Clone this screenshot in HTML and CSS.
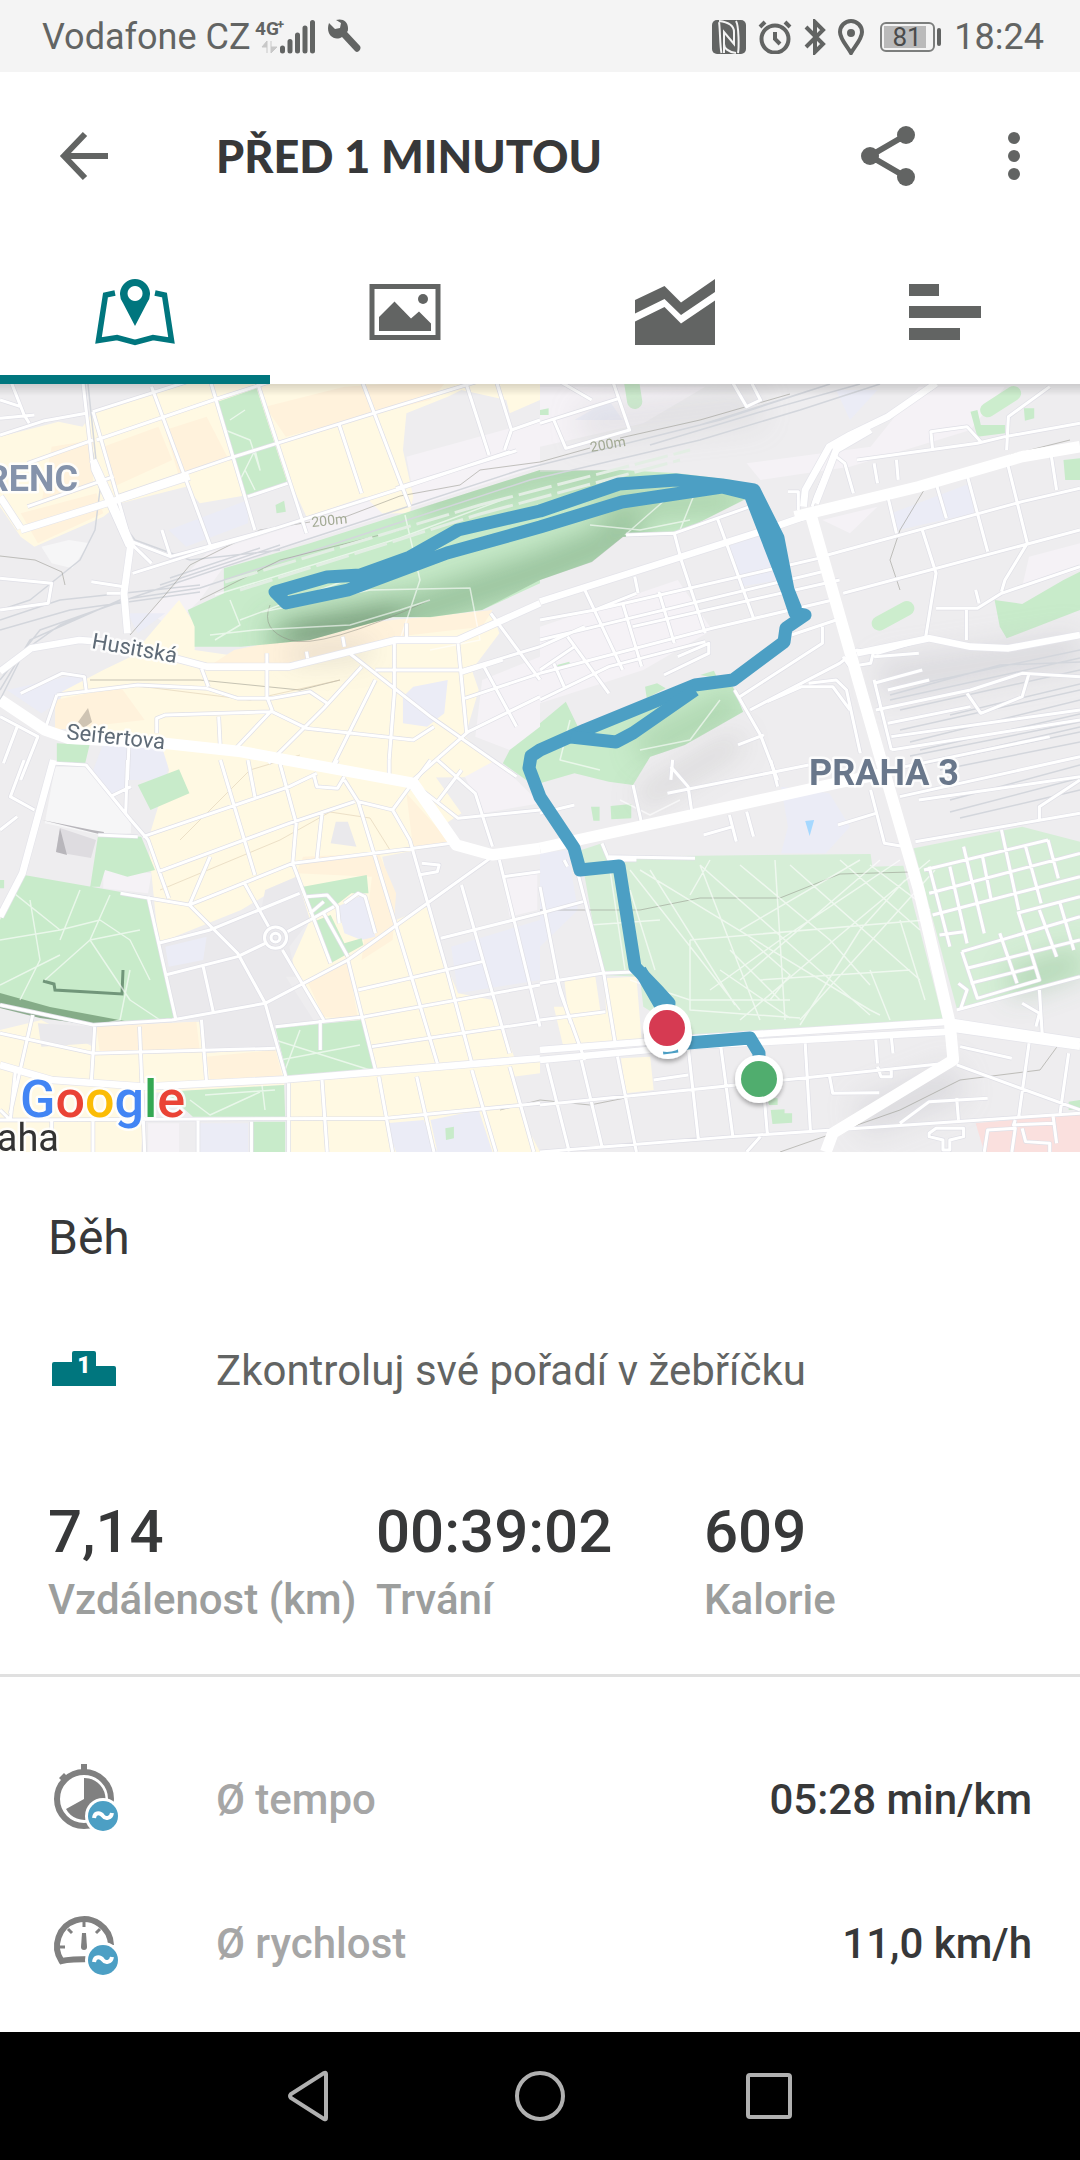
FILE: index.html
```html
<!DOCTYPE html>
<html lang="cs">

<head>
    <meta charset="utf-8">
    <meta name="viewport" content="width=device-width, initial-scale=1.0">
    <title>Běh</title>
    <link rel="stylesheet" href="styles.css">
</head>

<body>

    <div class="statusbar">
        <span>Vodafone CZ</span>
        <svg class="signal" viewBox="254 0 64 72" width="64" height="72">
            <text x="255" y="34" class="net">4G</text>
            <text x="277" y="28" class="net plus">+</text>
            <path d="M267 52V40l-5 6h5M271 40v12l6-6h-6" class="arrows" />
            <path d="M282.5 47v3M290 40.500v9.500M297.500 34v16M305 27v23M312.500 21.500v28.500" class="bars" />
        </svg>
        <svg viewBox="0 0 36 36" width="36" height="36" class="wrench">
            <path d="M3 4l6 6 5-1 1-5-5-3c6-2 12 1 12 8 0 2 0 3-1 4l13 14c2 3-2 8-5 5L16 18C8 23-1 15 3 4z" />
        </svg>
        <div class="status-right">
            <svg viewBox="0 0 34 34" width="34" height="34">
                <rect width="34" height="34" rx="5" fill="#626463" />
                <path d="M7 2C8 6 8 28 9.500 33M7 1C16 2 22 5 22 12v12L12 12v21M24 33C16 32 12 28 12 24M26 33C27 28 27 6 24 1" class="nfc" />
            </svg>
            <svg viewBox="0 0 34 34" width="34" height="34" class="line">
                <circle cx="17" cy="19" r="13.500" />
                <path d="M17 12v7l5 5M2 7l5-5M32 7l-5-5" />
            </svg>
            <svg viewBox="0 0 22 36" width="22" height="36" class="line">
                <path d="M2 8l17 17-8 8V3l8 8L2 28" />
            </svg>
            <svg viewBox="0 0 26 36" width="26" height="36" class="line">
                <path d="M13 34C9 27 2 20 2 13a11 11 0 0 1 22 0c0 7-7 14-11 21z" />
                <circle cx="13" cy="14" r="2" fill="#626463" />
            </svg>
            <svg viewBox="0 0 62 30" width="62" height="30" class="power">
                <rect x="1" y="1" width="53" height="28" rx="5" class="battery" />
                <rect x="4" y="4" width="42" height="22" fill="#bababa" />
                <rect x="57" y="6" width="4" height="18" rx="2" fill="#626463" />
                <text x="27" y="24" class="charge">81</text>
            </svg>
            <span>18:24</span>
        </div>
    </div>

    <header class="appbar">
        <button class="icon" aria-label="Zpět">
            <svg viewBox="0 0 72 72" width="72" height="72" class="thick">
                <path d="M60 36H16M37 14L16 36l21 22" />
            </svg>
        </button>
        <h1>PŘED 1 MINUTOU</h1>
        <button class="icon" aria-label="Sdílet">
            <svg viewBox="0 0 72 72" width="72" height="72" class="thick">
                <path d="M54 15L18 36l36 21" />
                <g fill="#626463" stroke="none">
                    <circle cx="18" cy="36" r="9" />
                    <circle cx="54" cy="15" r="9" />
                    <circle cx="54" cy="57" r="9" />
                </g>
            </svg>
        </button>
        <button class="icon" aria-label="Další možnosti">
            <svg viewBox="0 0 72 72" width="72" height="72" fill="#626463">
                <circle cx="36" cy="18" r="6" />
                <circle cx="36" cy="36" r="6" />
                <circle cx="36" cy="54" r="6" />
            </svg>
        </button>
    </header>

    <nav class="tabs">
        <button class="valgt" aria-label="Mapa">
            <svg viewBox="0 0 80 72" width="80" height="72">
                <path d="M20 17l-9.500 2L3.500 64.500 22 61.500 40 66.500 58 61.500 76.500 64.500 69.500 19 60 17" fill="none" stroke="#00767e" stroke-width="5.500" />
                <path d="M40 50L28 27a15 15 0 1 1 24 0zM40 10a7.500 7.500 0 1 0 .1 0z" fill="#00767e" fill-rule="evenodd" />
            </svg>
        </button>
        <button aria-label="Fotky">
            <svg viewBox="0 0 80 72" width="80" height="72" fill="#626463">
                <rect x="7" y="10.500" width="66" height="51" fill="none" stroke="#626463" stroke-width="5" />
                <path d="M14 41l15.500-15.500L46 42.500l8-7 12 12V55H14z" />
                <circle cx="58" cy="23" r="5" />
            </svg>
        </button>
        <button aria-label="Grafy">
            <svg viewBox="0 0 80 72" width="80" height="72" fill="#626463">
                <path d="M0 24l29.500-14L46 26.500 80 3v13L46 39 29.500 23 0 37.500z" />
                <path d="M0 45.500L29.500 31 46 47.500 80 24.500V69H0z" />
            </svg>
        </button>
        <button aria-label="Statistiky">
            <svg viewBox="0 0 80 72" width="80" height="72" fill="#626463">
                <path d="M4 8h30v12H4zM4 30h72v12H4zM4 52h51v12H4z" />
            </svg>
        </button>
    </nav>

    <main>
        <div class="map">
            <svg viewBox="0 384 1080 768">
                <defs>
                    <filter id="soft" x="-20%" y="-20%" width="140%" height="140%">
                        <feGaussianBlur stdDeviation="14" />
                    </filter>
                    <filter id="shadow" x="-30%" y="-30%" width="160%" height="170%">
                        <feDropShadow dx="0" dy="3" stdDeviation="2" flood-opacity=".3" />
                    </filter>
                    <clipPath id="hill">
                        <path d="M224 568L310 543 540 470 623 470 733 480 750 497 678 533 623 537 592 562 540 580 482 610 430 617 393 617 310 640 241 647 195 647V627L188 610 224 593Z" />
                        <path d="M540 723L566 702 578 727 664 703 698 680 733 687 743 712 685 745 650 757 633 785 540 783 505 770Z" />
                    </clipPath>

                    <!-- the four tiles share a grid of 1568 x 1200 units -->
                    <g id="minor">
                        <g transform="translate(0 380) scale(.3444 .3333)">
                            <path d="M0 165L130 122 250 100M30 0L70 105 85 130M0 115L100 105M0 60L60 80M270 95L620 -20M270 95L380 490 440 550M280 180L620 60 800 0M440 20L610 495M610 0L740 450M745 0L890 460M340 350L665 235 1100 95 1400 0M80 380L330 290M80 250L270 180M1050 0L1190 380M1350 0L1420 225M720 350L835 310M495 530L800 445 1150 330 1480 215M385 580L800 445M985 135L1050 340M470 450L495 530 370 480M1150 325L1500 212M1440 0L1485 150 1568 120M1485 150L1465 210M240 0L270 270 370 500" />
                            <path d="M165 945L400 915 600 925 690 955 790 955 900 935 950 970M165 945L130 1050M250 930L245 890 180 880 60 940M455 1060V1015L480 1005 790 995 890 1045 1200 1080 1260 1040M775 820V950L790 990 680 1110M585 865L605 920M1015 820L1250 1010 1500 1190M1050 860L940 985 780 1150M1090 900L960 1170M1145 790V940L1130 1140M1090 870H1345L1568 800M1330 790L1355 1060M1425 700L1568 900M1350 955L1568 880M1340 880L1460 840M1400 850L1500 1040M1568 950L1360 1055 1200 1200M635 1010L640 1110M995 770L1000 800M1180 730V780M890 815L893 835M0 1010L110 1070 60 1200M50 1040L10 1150M375 1080L370 1200M265 605L360 620M310 640H350M0 595L150 610 140 670 0 690" />
                        </g>
                        <g transform="translate(540 380) scale(.3444 .3333)">
                            <path d="M0 130L230 55M210 0L260 150 75 205 40 120M50 0L150 60M555 0L600 80 640 60 610 0M0 800L130 740M0 960L200 860 480 785M130 630L240 870M240 670L295 860M345 635L390 790M410 540L480 760M515 415L620 715M390 460L410 540M275 590L285 640M0 720L160 690 830 530M0 780L160 740 840 570M80 770L200 940M270 740L870 600M0 880L500 745 850 660M250 465L390 460 610 380M40 850L70 920M100 800L0 870M160 690L280 640M400 830L490 790 490 820 360 885M730 765L860 720M580 950L820 790 820 740M610 990L870 850 920 810 980 820 1130 775M565 930L640 1065 690 1200M575 1095L650 1065" />
                            <path d="M835 525L1400 365 1568 325M880 640L1568 450M1010 350L1035 460M1150 310L1180 415M1240 285L1300 515M1355 240L1415 490 1350 600 1340 635M1485 230L1500 330M1110 450L1150 580 1120 770M1150 685L1270 685 1340 640 1568 560M920 240L1270 190 1350 170 1568 130M1355 210L1360 110 1480 20M1140 210L1135 155 1170 150 1240 140 1280 185M860 230L885 250 910 340M790 380L800 350 850 230M720 335H750L750 390M970 250L980 310M1035 240L1040 300M970 910L1110 870M970 830L1100 820M975 990L1250 930 1400 880 1568 890M1010 930L1130 900M1240 940L1280 1000 1400 950 1420 880M1010 1030L1250 980M1020 1070L1568 990M1020 1110L1568 1020M780 910L860 900 890 930 930 1120M970 900L1020 1110M660 965L760 920 850 920 900 990M880 830L900 860 960 850 970 810M1265 630L1275 670M1238 690V780M385 1140L380 1200M1060 1160L1480 1070" />
                        </g>
                        <g transform="translate(0 760) scale(.3444 .3333)">
                            <path d="M100 150L30 110 70 0M0 210L50 170M160 10L250 15 380 180 430 240 490 415M370 0L365 160M320 110L380 80M285 225L400 230M415 230L840 80 920 40M460 335L840 190 1030 125M550 435L850 310 1200 265 1310 250M350 400L550 435 690 580 770 730 830 950M550 435L610 290M430 410L510 775M460 550L610 510 870 400M480 645L690 590 770 550M810 0L860 190 850 310 960 610M640 0L740 345M720 0L740 110M935 160L920 300M1000 60L1040 125 1180 600 1270 910M1040 125L1140 150 1190 240 1300 640 1370 910M1190 80L1140 150M770 730L1010 600 1430 290M835 515L900 480M820 570L940 780M710 370L780 500M590 620L620 760M1010 600L1090 930M0 735L270 795 500 780 770 730M800 800L1060 770 1568 675M1080 860L1568 785M1040 690L1400 605M1280 535L1568 460M1340 375L1480 880M1450 300L1568 800M1460 350L1568 335M910 40L920 80 980 85 1000 50M1250 0L1200 70M1340 30L1270 125M1270 0L1380 100 1430 260M1200 70L1330 175 1568 150M980 0L970 20M1130 0V50" />
                            <path d="M95 765L30 1060M275 800L265 970M405 800L420 1176M585 780L600 970M0 820L270 880 800 865M0 1080L1120 1075 1568 1030M270 1080V1176M575 1080V1176M730 1085V1176M838 970V1176M935 960L950 1176M1100 950L1140 1176M1210 950L1260 1176M1370 930L1440 1176M1480 920L1550 1176M45 930L30 1080 0 1050M150 1080V1176M890 410L950 405 980 440 985 490M1000 430L1040 400 1060 410 1090 520M900 460L940 425M940 460L1010 590M900 480L970 440M1225 310L1275 315 1270 335 1215 345M930 780L930 870" />
                            <circle cx="800" cy="533" r="32" />
                            <circle cx="800" cy="533" r="13" />
                        </g>
                        <g transform="translate(540 760) scale(.3444 .3333)">
                            <path d="M0 460L125 425M110 340L185 640 220 860M0 670L180 640 290 635M0 780L190 755M50 660L90 790M0 380L60 700 130 900M370 100L780 15M380 20L430 80 440 150M270 75L295 190M0 160L100 135M670 0L690 80M550 165L570 245M600 155L620 230M475 225L560 200M960 90L1000 250 1060 260M865 195L975 160M1090 245L1568 160M1045 110L1568 -10M1100 120L1568 50M1450 180V140L1568 60M200 290L450 295M180 250L200 300 280 300M70 300L80 320" />
                            <path d="M1115 330L1475 240M1130 400L1568 280M1140 465L1568 350M1385 460L1568 410M1130 320L1190 560M1190 320L1240 550M1230 260L1290 520M1285 290L1310 420M1340 210L1390 450M1410 260L1455 430M1475 240L1505 355M1160 525L1230 515M1225 575L1568 470M1225 575L1270 715 1450 660 1390 460M1240 625L1568 540M1250 670L1440 620M1335 520L1385 670M1450 450L1500 590M1510 430L1550 570M1210 750L1568 650M1450 690L1460 850M1400 730L1450 760 1440 800M1215 670L1240 690 1220 750" />
                            <path d="M0 1035L430 990 1180 910M20 910L85 1176M120 900L180 1160M225 890L280 1176M430 860L460 1140M525 860L560 1130M650 1000L660 1120M770 850L785 1110M0 1176L560 1130 850 1110 1568 1060M330 960L430 945M840 945L850 1000 985 998M980 920L990 950H1020V930M1210 915L1568 1050M1045 1090L1130 1025 1300 1015M1210 1015L1215 1080M1420 850L1390 1070M1535 880L1510 1060M1220 860L1370 895M975 840L980 910M1020 830L1025 880M640 1130L600 1176M1380 1080L1375 1095 1490 1090M1130 1120L1150 1105H1230L1230 1130 1190 1140V1170H1170V1140L1130 1130ZM1290 1176L1300 1110 1380 1105 1370 1176M1400 1105L1410 1145 1480 1150V1176M1490 1070L1500 1150" />
                        </g>
                    </g>

                    <g id="major">
                        <g transform="translate(0 380) scale(.3444 .3333)">
                            <path d="M60 450L340 360 550 290M0 350L60 445M270 240L380 490 360 640 370 760M0 875L90 805 230 780 290 785M490 830L600 860H840L1150 780H1330L1568 670" />
                        </g>
                        <g transform="translate(540 380) scale(.3444 .3333)">
                            <path d="M0 665L640 455 780 405M765 380L770 330 840 200 900 165 1010 110 1150 10M800 370L860 210 960 150M920 820L1130 775 1250 800 1360 805 1568 765" />
                        </g>
                        <g transform="translate(0 760) scale(.3444 .3333)">
                            <path d="M155 0L65 340 0 470M0 915L150 960 420 980 835 958 1568 895" />
                        </g>
                        <g transform="translate(540 760) scale(.3444 .3333)">
                            <path d="M0 870L440 835 1190 785M0 900L440 858 1190 815M1190 785L1568 845M1190 805L1568 860" />
                        </g>
                    </g>

                    <g id="artery">
                        <g transform="translate(0 380) scale(.3444 .3333)">
                            <path d="M0 960L130 1050 200 1075 480 1090 700 1115 1200 1210 1325 1395 1430 1425 1568 1405" />
                        </g>
                        <g transform="translate(540 380) scale(.3444 .3333)">
                            <path d="M740 410L1100 320 1400 230 1568 200" />
                            <path d="M785 400L990 1140M0 1405L420 1310 860 1210 1000 1180" />
                        </g>
                        <g transform="translate(540 760) scale(.3444 .3333)">
                            <path d="M990 0L1100 390 1190 790 1200 900 850 1120 830 1176" />
                        </g>
                    </g>

                    <g id="footpaths">
                        <path d="M240 620L360 575 440 556M215 595L400 538 510 497M262 612L370 590 470 588 480 640 430 650M255 630L350 625 400 610 430 600M405 515L420 580 400 640M210 635L255 630M230 600L240 625 215 640M690 520L640 530 590 525M625 535L665 500M700 480L680 530" />
                        <path d="M10 890L60 930 100 920 130 940 150 980M0 940L60 930M30 900L40 960 20 1000M80 890L60 940M110 895L90 940 130 1000 160 1020M45 980L90 940 140 930M0 985L60 955M130 970L120 1020 100 1025M215 400L225 430 250 440 260 470 255 450 240 480M245 410L230 420M245 470L255 490" />
                        <path d="M640 870L870 1010 880 1015M700 865L870 1015M740 865L830 940 870 985M790 865L920 980M840 860L920 930M870 865L930 910M930 860L840 935 740 1020M900 860L780 940 710 990M860 860L740 930M710 860L690 895M690 940L925 920M775 860L785 1020M760 980L910 970M630 870L740 1010M650 870L735 1005M700 865L760 1020M905 880L860 930 800 1025M610 870L625 970M630 890L655 970M590 925L660 920M690 940L690 1010 800 1018M720 970L790 1018M750 940L790 975 770 1000M730 950L780 1000M880 860L740 980M935 870L800 1020M870 970L890 1020M900 920L925 1000M630 980L690 1000 790 1000" />
                        <path d="M620 800L650 815 680 800M640 750L690 740 720 700M570 720L560 760 600 770" />
                        <path d="M275 1040L370 1070M280 1060L360 1045M300 1030L285 1070M205 1095L275 1090M190 1100L210 1115 260 1092M262 1085L265 1110" />
                    </g>

                    <g id="rails">
                        <path d="M85 384L90 440 100 490 95 530 80 560 30 600 0 610M88 384L96 460 105 500 135 540 190 560 280 550M0 620L60 600 200 585M0 630L70 610 200 592M0 690L30 640 120 600 200 588 300 555 530 480 700 440 800 410 880 384M0 680L40 630 140 595 290 545 520 470 700 425 780 400 830 384M0 700L25 650 60 625 110 605M160 585L280 545M170 578L260 548M600 450L720 420 830 384M650 445L760 412 860 384" />
                        <path d="M890 690L1080 650M890 700L1080 658M890 695L1000 665 1080 662M900 710L1080 670M900 730L1080 690M910 742L1080 700M920 750L1080 714M910 756L1080 722M920 765L1080 732M940 770L1080 742M950 800L1080 765M950 812L1080 778M960 818L1080 790M980 750L1080 727M950 715L1080 684" />
                    </g>
                </defs>

                <rect y="384" width="1080" height="768" fill="#eeedef" />

                <g class="areas">
                    <g transform="translate(0 380) scale(.3444 .3333)">
                        <path class="rose" d="M600 520L1568 200V260L900 480 650 560 580 660 500 740 430 700ZM1400 900L1568 830V1050L1480 1110 1380 1070ZM1180 230L1568 120V200L1200 340Z" />
                        <path class="lilac" d="M370 700H480L400 760ZM20 930L240 880V920L120 1000ZM490 450L720 360V430L540 500ZM300 1090H500L480 1200H260Z" />
                        <path class="yellow" d="M270 95L580 0H1568V60L1480 100 1470 60 1340 30 1300 50 1180 100 1170 210 1200 350 1190 400 1110 400 1060 350 890 410 840 300 720 345 580 370 540 320 350 370 300 410 100 500 60 470 0 380V170L170 125 240 140Z" />
                        <path class="sand" d="M480 150L600 110 660 230 520 290ZM770 80L1000 20 1300 0 1250 60 1050 110 830 170ZM150 200L270 180V320L120 370ZM60 400L280 340 300 400 110 490ZM300 200L460 140 500 240 330 320Z" />
                        <path class="yellow" d="M520 660L570 740 565 810 700 830 1000 780 1140 720 1430 700 1450 760 1370 870 1390 930 1350 1070 1480 1190 500 1200 470 1100 160 1030 180 935 300 870 380 830Z" />
                        <path class="sand" d="M680 810L1050 730 1430 690 1400 740 1150 770 840 850H620ZM160 960L350 920 420 1020 160 1050Z" />
                        <path class="lilac" d="M1200 920L1300 900 1290 1000 1240 1040 1170 1030V950Z" />
                        <path class="green" d="M632 65L745 25 835 310 715 345ZM800 375L825 362 830 395 803 400ZM165 1090L260 1095 245 1160 165 1150Z" />
                        <path class="green" d="M650 565L900 490 1568 270V610L1400 690 1250 712H1140L900 780 700 800H565V740L545 690 650 640Z" />
                        <path class="green" d="M1568 1040L1480 1110 1460 1150 1568 1230Z" />
                        <path class="white" d="M120 500L200 480 260 490 210 565 150 550Z" />
                    </g>
                    <g transform="translate(540 380) scale(.3444 .3333)">
                        <path class="rose" d="M0 20H480L300 130 0 200ZM0 740L400 600 500 750 300 870 0 970ZM600 250L960 200 1100 20H1350L1250 150 900 260 640 300ZM1420 530L1568 490V570L1400 620ZM820 420L980 380 900 460Z" />
                        <path class="lilac" d="M540 500L640 460 700 600 580 620ZM1020 400L1250 310 1260 400 1040 450ZM100 120L200 60 240 120ZM860 30H980L900 120Z" />
                        <path class="green" d="M0 275L240 270 400 280 560 300 610 350 400 460 240 470 150 545 0 600Z" />
                        <path class="green" d="M0 1030L75 965 110 1040 360 970 460 900 560 920 590 995 420 1095 320 1130 270 1215 200 1205 100 1180 0 1210ZM305 920L340 910 365 925 310 955ZM465 885L505 872 515 895Z" />
                        <path class="green" d="M1320 660L1400 672 1520 600 1568 575V690L1355 775 1335 740ZM1250 95L1270 90 1280 135H1350V160L1270 170ZM1405 85H1435V115L1408 122ZM1520 240L1568 235V300H1525ZM50 855L85 845 90 860 55 870ZM0 90L25 85V105H0Z" />
                        <path class="pitch" d="M985 730L1065 685M1300 90L1375 40M265 0L275 65" />
                    </g>
                    <g transform="translate(0 760) scale(.3444 .3333)">
                        <path class="white" d="M160 20H250L380 180V220L290 225 130 190Z" />
                        <path class="rose" d="M300 330L440 340 430 400 300 385ZM430 1090H520V1176H430ZM1460 360L1560 340V450L1480 470ZM1350 50L1440 0 1568 130 1400 160Z" />
                        <path class="yellow" d="M500 0H1230L1340 160 1280 200 1310 250 1110 290 1150 480 1240 440 1310 650 1330 700 1430 720 1500 910 1568 900V940L1490 950 1520 1080 1568 1176H835V940L1090 930 1050 780 940 785 840 620 900 480 860 350 700 450 460 550 430 240Z" />
                        <path class="yellow" d="M0 810L120 780 270 860V800L580 785 590 880 800 865 830 950 825 975 420 1000 410 1176H0Z" />
                        <path class="sand" d="M1180 100L1310 250 1200 270ZM880 290L1100 280 1150 400 1140 540 1050 600 1080 350 860 340ZM600 890L800 870 820 950 610 960ZM280 800L570 785 580 870 290 880ZM1010 600L1040 780 940 770 890 660Z" />
                        <path class="gray" d="M460 550L610 500 760 440 770 390 860 350 900 480 840 560 860 650 830 650 910 780 800 800V860L590 880 580 780H510ZM975 185H1010L1035 260 960 250ZM110 790L270 800V850L120 860Z" />
                        <path class="lilac" d="M980 440L1060 400 1090 530 1050 540 1000 520ZM480 560L600 530 590 600 490 620ZM1310 560L1568 480V660L1330 700ZM580 1090H720V1176H580ZM1120 1090L1230 1080 1270 1176H1150ZM1250 1080L1390 1050 1430 1176H1270ZM300 0H370V80L320 110 270 40Z" />
                        <path class="green" d="M70 345L430 410 510 775 270 795 0 735V480ZM285 225L410 230 450 330 370 350 305 330 290 380H262ZM400 75L520 28 550 100 437 150ZM880 380L1065 345 1070 400 1020 400 970 440 910 470ZM910 485L960 465 1000 550 1050 535 1055 555 960 610ZM800 805L1050 780 1085 930 835 950ZM480 995L825 975 828 1070H560ZM735 1085H828V1176H735ZM1293 1105L1318 1100V1135L1295 1140ZM0 360H12V385H0Z" />
                    </g>
                    <g transform="translate(540 760) scale(.3444 .3333)">
                        <path class="lilac" d="M0 280L80 270 110 450 0 560ZM700 80L840 100 900 200 830 280 700 280 720 200Z" />
                        <path class="yellow" d="M70 655L160 645 175 750 195 760 200 860 70 870 40 740H80ZM185 655L280 650 295 840 200 850ZM235 895L320 890 330 990 250 1000Z" />
                        <path class="green pale" d="M120 270L180 250 200 290 960 282 965 320 1055 317 1170 780 720 810 440 830 300 740 290 650 180 645 130 350Z" />
                        <path class="green pale" d="M1085 265L1400 200 1568 245V650L1210 745Z" />
                        <path class="green" d="M148 140H173V182H155ZM205 138L265 132V175L207 178ZM660 1015H690V1035H665ZM670 1050L710 1048V1060H732V1088L675 1092ZM1535 1025L1568 1020V1050H1535Z" />
                        <path class="pink" d="M1265 1090L1568 1060V1176H1290Z" />
                        <path class="water" d="M770 183L796 180 783 228Z" />
                    </g>
                </g>

                <!-- relief -->
                <g class="relief" clip-path="url(#hill)">
                    <g filter="url(#soft)">
                        <path d="M270 640L420 610 540 570 640 530" stroke="#5f9064" stroke-width="36" opacity=".45" />
                        <path d="M290 638L400 618" stroke="#3e5a40" stroke-width="20" opacity=".5" />
                        <path d="M420 505L540 475 620 470" stroke="#79a87c" stroke-width="20" opacity=".5" />
                        <path d="M600 510L740 500" stroke="#79a87c" stroke-width="16" opacity=".6" />
                        <path d="M640 750L740 700" stroke="#7fb083" stroke-width="26" opacity=".4" />
                    </g>
                </g>
                <g class="relief" filter="url(#soft)">
                    <path d="M290 655L370 650M640 800L740 740" stroke="#9a9a98" stroke-width="14" opacity=".35" />
                    <path d="M860 1120L960 1080M880 680L1080 650" stroke="#b9b9c4" stroke-width="36" opacity=".35" />
                    <path d="M1010 985L1080 960" stroke="#6ba772" stroke-width="26" opacity=".35" />
                    <path d="M580 425L760 405" stroke="#c3c2c8" stroke-width="36" opacity=".3" />
                </g>
                <path d="M0 993L50 1007 130 1022 100 1026 40 1018 0 1008Z" fill="#6f9772" opacity=".75" />
                <path d="M43 981L54 984 55 990 122 994 123 970" fill="none" stroke="#71967a" stroke-width="3" />
                <path d="M60 828L56 852 91 858 96 840Z" fill="#dedce0" />
                <path d="M60 828L56 852 67 855ZM42 820L92 830 104 832 103 835Z" fill="#b8b6bb" />
                <path d="M78 722L88 708 92 722 84 728Z" fill="#cfc4b3" />

                <use href="#rails" class="rail" />
                <path class="contour" d="M0 556L35 560 62 572 65 585M130 635L165 595 190 565 260 530 310 522M345 517L400 496 460 485 480 470 540 462 590 448M620 438L700 420 790 394M90 680L200 680 300 690 340 680M270 605Q260 630 290 640T430 600M200 600L280 560 400 530M540 910L640 910 700 898 780 898 840 874 910 872M500 1110L540 1100 590 1105 640 1095M780 1152L900 1110 960 1080 1040 1070 1062 1040M930 480L900 530 890 560 900 590M1010 455L1070 440" />
                <path class="contour warm" d="M180 840L250 770 300 755M90 690L130 685 250 700 340 680M160 890L280 840 330 812 370 818 390 850" />

                <use href="#footpaths" class="footpath" />
                <path class="stripes" d="M225 582L480 505M240 590L480 514M480 505L690 450M480 514L680 460M520 518L620 485" />
                <use href="#minor" class="minor casing" />
                <use href="#major" class="major casing" />
                <use href="#minor" class="minor" />
                <use href="#major" class="major" />
                <use href="#artery" class="artery" />

                <g class="labels">
                    <text x="78" y="491" class="district west" text-anchor="end">RENC</text>
                    <text x="809" y="785" class="district">PRAHA 3</text>
                    <text transform="translate(91 648) rotate(10)" class="street">Husitská</text>
                    <text transform="translate(66 739) rotate(6)" class="street">Seifertova</text>
                    <text transform="translate(312 527) rotate(-6)" class="height">200m</text>
                    <text transform="translate(591 452) rotate(-10)" class="height">200m</text>
                    <text x="59" y="1151" class="city" text-anchor="end">aha</text>
                    <text x="20" y="1117" class="google"><tspan fill="#4285f4">G</tspan><tspan fill="#ea4335">o</tspan><tspan fill="#fbbc05">o</tspan><tspan fill="#4285f4">g</tspan><tspan fill="#34a853">l</tspan><tspan fill="#ea4335">e</tspan></text>
                </g>

                <g class="route">
                    <path d="M759 1060V1053L750 1038 688 1043 668 1048 667 1027 669 1003 659 992 635 967 619 866 580 870 574 848 540 797 529 768 531 756 540 750 585 730 695 685 733 680 784 642 786 628 805 615 795 613 788 592 750 494 722 487 622 502 540 527 447 553 348 590 286 603 275 592 327 577 360 575 410 557 458 530 540 511 619 484 676 480 722 485 754 490 778 538 788 590 796 610" />
                    <path d="M571 737L616 742 633 733 695 690M640 970L662 1008" />
                </g>
                <g filter="url(#shadow)">
                    <circle cx="668" cy="1035" r="24" fill="#fff" />
                    <circle cx="759" cy="1079" r="24" fill="#fff" />
                </g>
                <path d="M663 1052l15-2" stroke="#4c9fc4" stroke-width="5" />
                <circle cx="667" cy="1028" r="24" fill="#fff" />
                <circle cx="667" cy="1028" r="18" fill="#d63a52" />
                <circle cx="759" cy="1079" r="18" fill="#50ad6e" />
            </svg>
        </div>

        <section class="summary">
            <h2>Běh</h2>
            <a href="#" class="ranking">
                <svg viewBox="0 0 72 72" width="72" height="72">
                    <path d="M4 52V30q0-2 2-2h18V19q0-2 2-2h20q2 0 2 2v13h18q2 0 2 2v18z" fill="#00767e" />
                    <text x="36" y="39" class="first">1</text>
                </svg>
                <span>Zkontroluj své pořadí v žebříčku</span>
            </a>
            <dl class="totals">
                <div>
                    <dt>Vzdálenost (km)</dt>
                    <dd>7,14</dd>
                </div>
                <div>
                    <dt>Trvání</dt>
                    <dd>00:39:02</dd>
                </div>
                <div>
                    <dt>Kalorie</dt>
                    <dd>609</dd>
                </div>
            </dl>
        </section>

        <ul class="details">
            <li>
                <svg viewBox="0 0 72 72" width="72" height="72">
                    <circle cx="36" cy="36" r="27" class="ring" />
                    <path d="M33 1h6v7h-6zM11 15l5-5 4 4-5 5z" fill="#808080" />
                    <path d="M36 36V15a21 21 0 1 1-18 31z" fill="#808080" />
                    <circle cx="55" cy="53" r="18" fill="#fff" />
                    <circle cx="55" cy="53" r="15" fill="#4c9fc4" />
                    <path d="M46 55c1-7 7-5 9-2s8 3 9-3" class="wave" />
                </svg>
                <span class="label">Ø tempo</span>
                <span class="value">05:28 min/km</span>
            </li>
            <li>
                <svg viewBox="0 0 72 72" width="72" height="72">
                    <path d="M63 38A27 27 0 1 0 13.500 54Q22 52 45 52" class="ring" />
                    <path d="M36 14v6M20 22l4 4M52 22l-4 4M11 40h6" class="ticks" />
                    <path d="M34 26h4l1 14a3 3 0 1 1-6 0z" fill="#808080" />
                    <circle cx="55" cy="53" r="18" fill="#fff" />
                    <circle cx="55" cy="53" r="15" fill="#4c9fc4" />
                    <path d="M46 55c1-7 7-5 9-2s8 3 9-3" class="wave" />
                </svg>
                <span class="label">Ø rychlost</span>
                <span class="value">11,0 km/h</span>
            </li>
        </ul>
    </main>

    <footer class="navbar">
        <button aria-label="Zpět">
            <svg viewBox="0 0 56 56" width="56" height="56">
                <path d="M43 6v44q0 2-2 1L8 30q-2-2 0-4L41 5q2-1 2 1z" />
            </svg>
        </button>
        <button aria-label="Domů">
            <svg viewBox="0 0 56 56" width="56" height="56">
                <circle cx="28" cy="28" r="23" />
            </svg>
        </button>
        <button aria-label="Přehled">
            <svg viewBox="0 0 56 56" width="56" height="56">
                <rect x="7" y="7" width="42" height="42" rx="2" />
            </svg>
        </button>
    </footer>

</body>

</html>
```

FILE: styles.css
```css
* {
    box-sizing: border-box;
}

body {
    margin: 0;
    min-height: 100vh;
    display: flex;
    flex-direction: column;
    background-color: #fff;
    color: #373839;
    font-family: Roboto, sans-serif;
}

svg {
    display: block;
    flex: none;
}

button {
    background: none;
    border: none;
    padding: 0;
    cursor: pointer;
}

/* status bar */

.statusbar {
    height: 72px;
    padding: 2px 36px 0 42px;
    display: flex;
    align-items: center;
    background-color: #f4f4f4;
    color: #626463;
    font-size: 36px;
}

.signal {
    margin-left: 4px;
}

.net {
    font-size: 19px;
    font-weight: 700;
    fill: #626463;
}

.plus {
    font-size: 13px;
}

.arrows {
    fill: #c8c8c8;
    stroke: #c8c8c8;
}

.bars {
    fill: none;
    stroke: #626463;
    stroke-width: 5;
    stroke-linecap: round;
}

.wrench {
    margin-left: 8px;
    fill: #626463;
}

.status-right {
    margin-left: auto;
    display: flex;
    align-items: center;
    gap: 12px;
}

.power {
    margin-left: 4px;
}

.nfc {
    fill: none;
    stroke: #f4f4f4;
    stroke-width: 2;
}

.line {
    fill: none;
    stroke: #626463;
    stroke-width: 4;
}

.battery {
    fill: none;
    stroke: #7c7e7d;
    stroke-width: 2;
}

.charge {
    font-size: 26px;
    text-anchor: middle;
    fill: #4a4b4b;
}

/* app bar */

.appbar {
    height: 168px;
    padding: 0 30px 0 48px;
    display: flex;
    align-items: center;
    gap: 54px;
}

.appbar h1 {
    flex: 1;
    margin: 0;
    padding-left: 42px;
    font-family: Lato, sans-serif;
    font-size: 45px;
    font-weight: 900;
}

.thick {
    fill: none;
    stroke: #626463;
    stroke-width: 6;
}

.tabs {
    height: 144px;
    display: flex;
}

.tabs button {
    flex: 1;
    display: flex;
    justify-content: center;
    align-items: center;
    border-top: 9px solid transparent;
    border-bottom: 9px solid transparent;
}

.tabs .valgt {
    border-bottom-color: #00767e;
}

/* map */

.map {
    position: relative;
    overflow: hidden;
}

.map::before {
    content: "";
    position: absolute;
    top: 0;
    left: 0;
    right: 0;
    height: 12px;
    background: linear-gradient(rgba(0, 0, 0, 0.14), transparent);
}

.map svg {
    width: 100%;
    height: auto;
}

.yellow { fill: #fff9e3; }
.sand { fill: #fff2dc; }
.rose { fill: #f5f2f6; }
.lilac { fill: #ebecf6; }
.gray { fill: #eae9ec; }
.white { fill: #f6f6f7; }
.green { fill: #c8ebca; }
.pale { fill: #d6eed7; }
.pink { fill: #fae0de; }
.water { fill: #a5d8ff; }

.pitch {
    fill: none;
    stroke: #ccedcd;
    stroke-width: 44;
    stroke-linecap: round;
}

.relief path,
.rail,
.contour,
.footpath,
.stripes,
.minor,
.major,
.artery,
.route {
    fill: none;
    stroke-linejoin: round;
}

.rail {
    stroke: #d3d6dc;
    stroke-width: 1.5;
}

.contour {
    stroke: #8e8e84;
    stroke-width: 1;
    opacity: 0.5;
}

.warm {
    stroke: #d9c7ac;
}

.footpath {
    stroke: rgba(255, 255, 255, 0.6);
    stroke-width: 1.5;
}

.stripes {
    stroke: #e3eee4;
    stroke-width: 3;
    stroke-dasharray: 34 6;
}

.minor {
    stroke: #fff;
    stroke-width: 9;
}

.minor.casing {
    stroke: #dfdfe6;
    stroke-width: 13;
}

.major {
    stroke: #fff;
    stroke-width: 20;
}

.major.casing {
    stroke: #e4e4ea;
    stroke-width: 24;
}

.artery {
    stroke: #fff;
    stroke-width: 34;
}

.labels {
    paint-order: stroke;
    stroke: #fff;
    stroke-width: 5;
    stroke-linejoin: round;
    stroke-opacity: 0.8;
}

.district {
    font-size: 36px;
    font-weight: 700;
    fill: #69778b;
}

.west {
    fill: #8593ab;
}

.street {
    font-size: 22px;
    fill: #5f6b77;
}

.height {
    font-size: 14px;
    fill: #a3aa95;
    stroke: none;
}

.city {
    font-size: 38px;
    fill: #333;
}

.google {
    font-size: 52px;
    font-weight: 500;
}

.route {
    stroke: #4c9fc4;
    stroke-width: 13;
}

/* summary */

.summary {
    padding: 58px 48px 42px;
    border-bottom: 3px solid #e0e0e0;
}

.summary h2 {
    margin: 0 0 56px;
    font-size: 48px;
    font-weight: 400;
    line-height: 56px;
}

.ranking {
    height: 96px;
    display: flex;
    align-items: center;
    gap: 96px;
    color: #626463;
    font-size: 42px;
    text-decoration: none;
}

.first {
    font-size: 23px;
    font-weight: 900;
    text-anchor: middle;
    fill: #fff;
}

.totals {
    margin: 78px 0 0;
    display: grid;
    grid-template-columns: repeat(3, 1fr);
    font-weight: 500;
}

.totals div {
    display: flex;
    flex-direction: column-reverse;
}

.totals dt {
    font-size: 42px;
    line-height: 64px;
    color: #9c9e9d;
    white-space: nowrap;
}

.totals dd {
    margin: 0;
    font-size: 60px;
    line-height: 72px;
}

/* details */

.details {
    margin: 0;
    padding: 50px 48px 0;
    list-style: none;
}

.details li {
    height: 144px;
    display: flex;
    align-items: center;
    font-size: 42px;
    font-weight: 500;
}

.label {
    margin-left: 96px;
    color: #a6a6a6;
}

.value {
    margin-left: auto;
}

.ring {
    fill: none;
    stroke: #808080;
    stroke-width: 6;
}

.ticks {
    stroke: #808080;
    stroke-width: 3;
}

.wave {
    fill: none;
    stroke: #fff;
    stroke-width: 4;
}

/* system navigation */

.navbar {
    height: 128px;
    margin-top: auto;
    display: flex;
    justify-content: center;
    align-items: center;
    gap: 173px;
    background-color: #000;
}

.navbar svg {
    fill: none;
    stroke: #b0b0b0;
    stroke-width: 4;
}
```
